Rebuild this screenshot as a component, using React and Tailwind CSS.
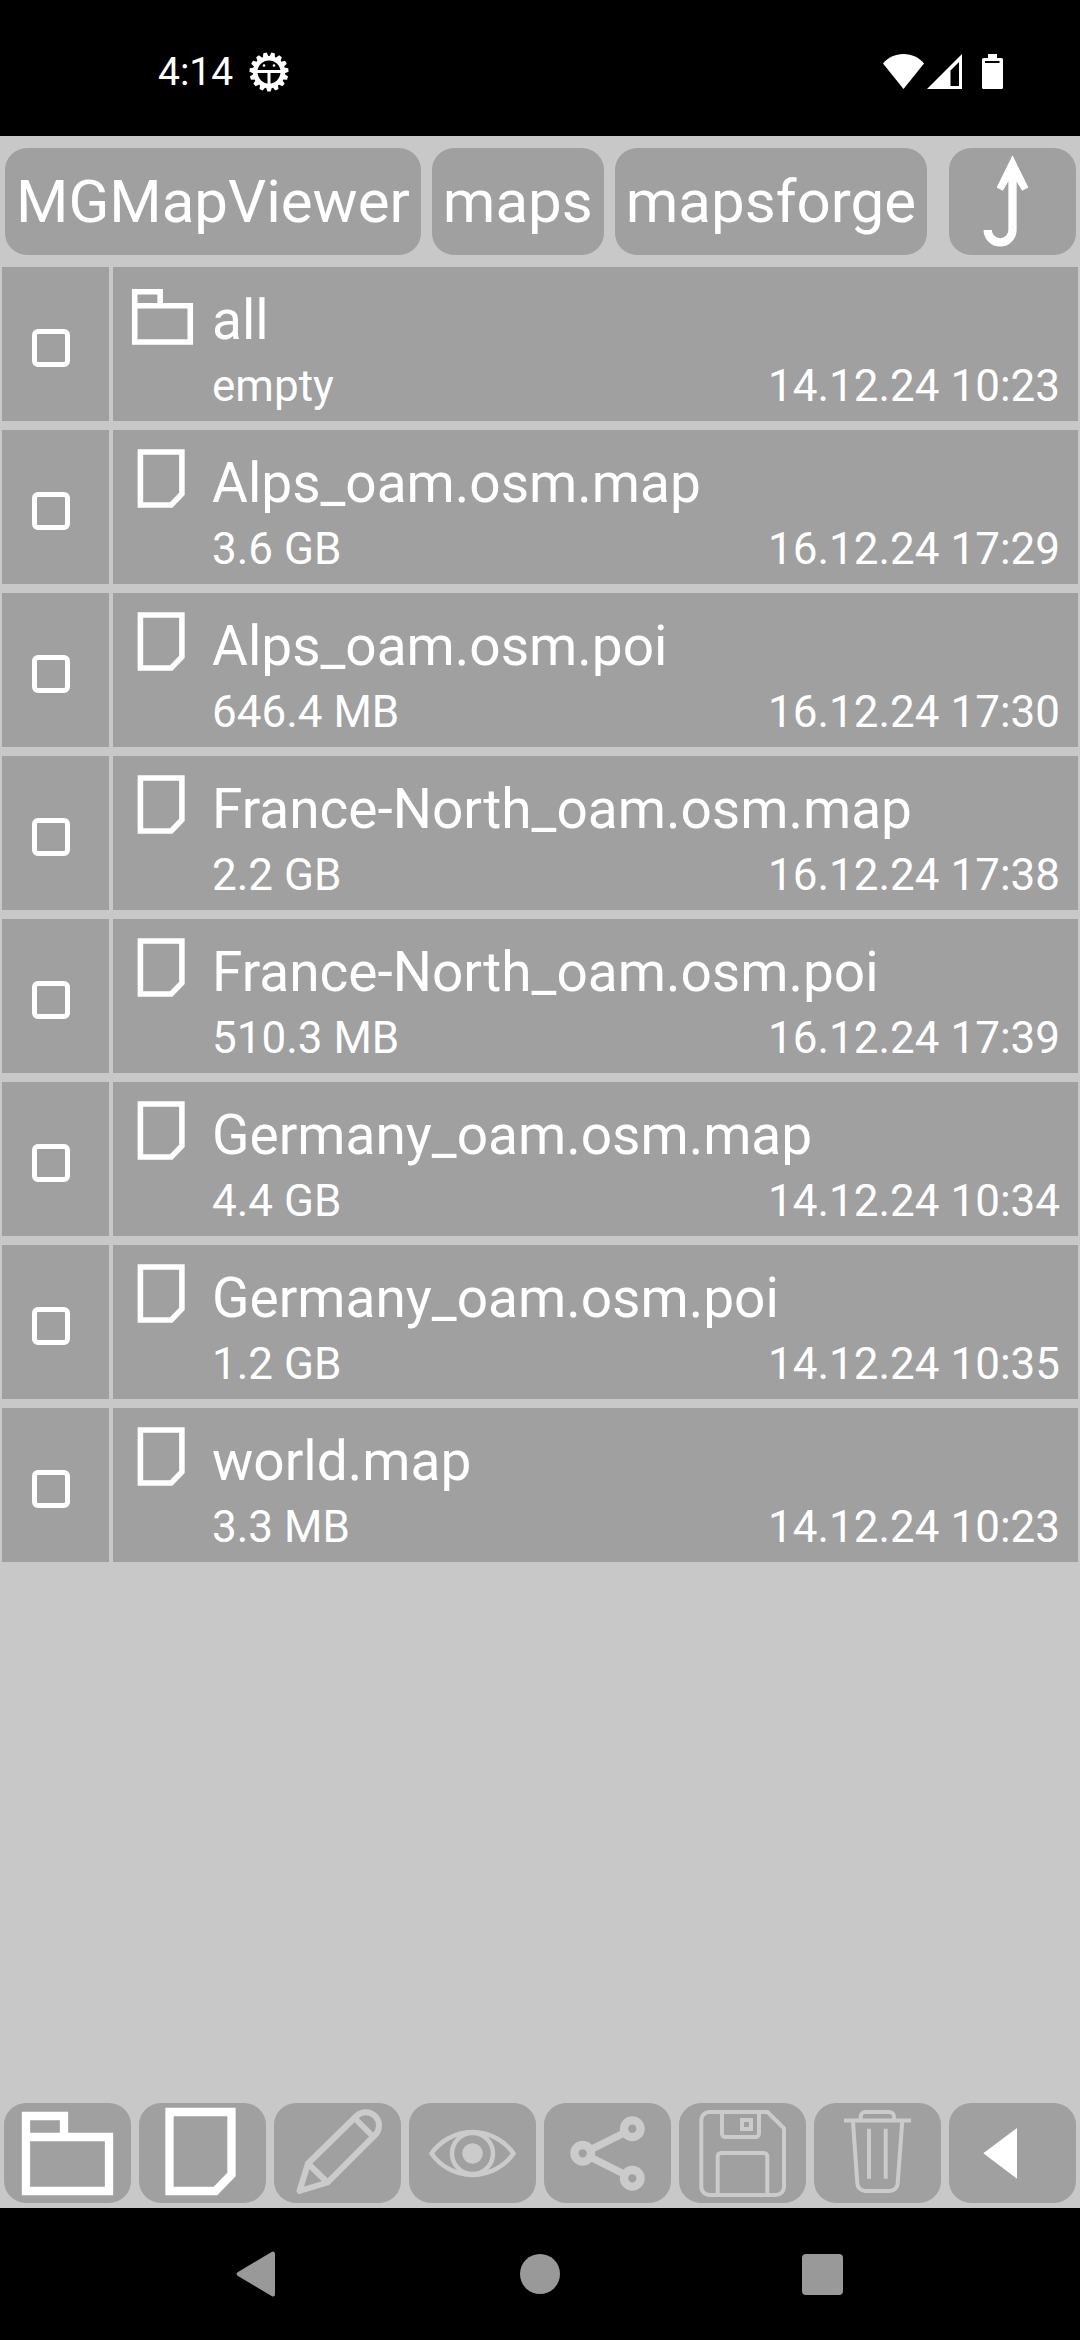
const files = [
  { name: 'all', size: 'empty', date: '14.12.24 10:23', folder: true },
  { name: 'Alps_oam.osm.map', size: '3.6 GB', date: '16.12.24 17:29' },
  { name: 'Alps_oam.osm.poi', size: '646.4 MB', date: '16.12.24 17:30' },
  { name: 'France-North_oam.osm.map', size: '2.2 GB', date: '16.12.24 17:38' },
  { name: 'France-North_oam.osm.poi', size: '510.3 MB', date: '16.12.24 17:39' },
  { name: 'Germany_oam.osm.map', size: '4.4 GB', date: '14.12.24 10:34' },
  { name: 'Germany_oam.osm.poi', size: '1.2 GB', date: '14.12.24 10:35' },
  { name: 'world.map', size: '3.3 MB', date: '14.12.24 10:23' },
];

const crumbs = ['MGMapViewer', 'maps', 'mapsforge'];

function Icon({ className = 'h-[100px] w-[127px]', children }) {
  return (
    <svg viewBox="0 0 127 100" className={className} fill="none" stroke="currentColor" aria-hidden="true">
      {children}
    </svg>
  );
}

function FolderIcon({ className }) {
  return (
    <Icon className={className}>
      <path d="M22 34V13h38v21M22 34h83v54H22z" strokeWidth="8.3" strokeLinecap="butt" />
    </Icon>
  );
}

function FileIcon({ className }) {
  return (
    <Icon className={className}>
      <path d="M30.5 9h62v62.500L76.500 88h-46z" strokeWidth="8.3" />
    </Icon>
  );
}

function PencilIcon() {
  return (
    <Icon>
      <g strokeWidth="6" strokeLinejoin="round">
        <path d="M25.500 88l8.500-27.500L82.500 13a13 13 0 0 1 18.500 19L53.500 79.500z" />
        <path d="M34 60.500l19.500 19M80.500 15l18 18" />
      </g>
    </Icon>
  );
}

function EyeIcon() {
  return (
    <Icon>
      <g strokeWidth="4.500">
        <path d="M22.500 50.500a50 50 0 0 1 82 0a50 50 0 0 1-82 0z" />
        <circle cx="63.500" cy="50.500" r="20.500" />
        <circle cx="63.500" cy="50.500" r="10.300" fill="currentColor" stroke="none" />
      </g>
    </Icon>
  );
}

function ShareIcon() {
  return (
    <Icon>
      <g strokeWidth="8.300">
        <circle cx="38.700" cy="50.300" r="8.300" />
        <circle cx="88.300" cy="25.700" r="8.300" />
        <circle cx="88.300" cy="75.300" r="8.300" />
        <path d="M46 47l35-17.500M46 54l35 17.500" strokeWidth="7.500" />
      </g>
    </Icon>
  );
}

function SaveIcon() {
  return (
    <Icon>
      <g strokeWidth="4">
        <path d="M30.300 9H88.500L105 25.300V84a8 8 0 0 1-8 8H30.300a8 8 0 0 1-8-8V17a8 8 0 0 1 8-8z" />
        <path d="M43 9v21.500a3.500 3.500 0 0 0 3.500 3.500h30a3.500 3.500 0 0 0 3.500-3.500V9" />
        <rect x="63" y="17" width="9" height="9" />
        <path d="M38.700 92V53.500a3.500 3.500 0 0 1 3.500-3.500h42.600a3.500 3.500 0 0 1 3.500 3.500V92" />
      </g>
    </Icon>
  );
}

function TrashIcon() {
  return (
    <Icon>
      <g strokeWidth="4">
        <path d="M30 17.500h67M46.700 17v-3.500a4.500 4.500 0 0 1 4.500-4.500h24.300a4.500 4.500 0 0 1 4.500 4.500V17" />
        <path d="M39 19l4.300 61a8 8 0 0 0 8 8h24.400a8 8 0 0 0 8-8l4.500-61" />
        <path d="M55 25.700v50M71.700 25.700v50" />
      </g>
    </Icon>
  );
}

function BackIcon() {
  return (
    <Icon>
      <path d="M34.300 50.300L68 25v50.700z" fill="currentColor" stroke="none" />
    </Icon>
  );
}

function UpIcon() {
  return (
    <svg viewBox="0 0 127 107" className="h-[107px] w-[127px]" fill="none" aria-hidden="true">
      <path d="M63.500 7.300L79.400 39.600l-6.200 3.200-5.600-9.300h-8.300l-5.500 9.300-6.200-3.200z" fill="currentColor" />
      <path d="M63.500 30v52a12.400 12.400 0 0 1-24.800 0" stroke="currentColor" strokeWidth="8.300" />
    </svg>
  );
}

function GearIcon() {
  const teeth = Array.from({ length: 15 }, (_, i) => i * 24);
  return (
    <svg viewBox="-20 -20 40 40" className="size-10" fill="none" stroke="currentColor" aria-hidden="true">
      <circle r="13.800" strokeWidth="4.600" />
      {teeth.map((angle) => (
        <path
          key={angle}
          d="M-3 15L-1.700 19.500H1.700L3 15z"
          fill="currentColor"
          stroke="none"
          transform={`rotate(${angle})`}
        />
      ))}
      <path d="M-13 -0.500H13M0 0V13" strokeWidth="3" />
      <circle cx="-5" cy="-6.500" r="1.300" fill="currentColor" stroke="none" />
      <circle cx="5" cy="-6.500" r="1.300" fill="currentColor" stroke="none" />
    </svg>
  );
}

function StatusIcons() {
  return (
    <div className="flex items-center">
      <svg viewBox="0 0 41 35" className="h-[35px] w-[41px]" aria-hidden="true">
        <path d="M0 9.500C5 3.500 12 0 20.500 0S36 3.500 41 9.500L20.500 35z" fill="currentColor" />
      </svg>
      <svg viewBox="0 0 35 35" className="ml-[3px] h-[35px] w-[35px]" aria-hidden="true">
        <path d="M35 0V35H0zM32 8l-8.500 8.500V32H32z" fill="currentColor" fillRule="evenodd" />
      </svg>
      <svg viewBox="0 0 21 35" className="ml-5 h-[35px] w-[21px]" aria-hidden="true">
        <path
          d="M6 0h9v4h4.500A1.500 1.500 0 0 1 21 5.500v28a1.500 1.500 0 0 1-1.500 1.500h-18A1.500 1.500 0 0 1 0 33.500v-28A1.500 1.500 0 0 1 1.500 4H6zM3 7v2h14.500V7z"
          fill="currentColor"
          fillRule="evenodd"
        />
      </svg>
    </div>
  );
}

const actions = [
  { label: 'New folder', Glyph: FolderIcon, enabled: true },
  { label: 'New file', Glyph: FileIcon, enabled: true },
  { label: 'Edit', Glyph: PencilIcon },
  { label: 'View', Glyph: EyeIcon },
  { label: 'Share', Glyph: ShareIcon },
  { label: 'Save', Glyph: SaveIcon },
  { label: 'Delete', Glyph: TrashIcon },
  { label: 'Back', Glyph: BackIcon, enabled: true },
];

function FileRow({ file }) {
  const Glyph = file.folder ? FolderIcon : FileIcon;
  return (
    <li className="flex gap-1">
      <label className="flex w-[107px] shrink-0 items-center bg-[#a0a0a0] pt-2 pl-[30px]">
        <input
          type="checkbox"
          aria-label={`Select ${file.name}`}
          className="size-[38px] appearance-none rounded-md border-[5px] border-white checked:bg-white"
        />
      </label>
      <button type="button" className="flex min-w-0 flex-1 items-start bg-[#a0a0a0] pr-[18px] pl-[7px] text-left">
        <Glyph className="mt-4 h-[67px] w-[85px] shrink-0" />
        <span className="flex min-w-0 flex-1 flex-col gap-2 pt-[21px] pb-[9px] pl-[7px]">
          <span className="truncate text-[55px] leading-[64px]">{file.name}</span>
          <span className="flex justify-between text-[44px] leading-[52px]">
            <span>{file.size}</span>
            <span>{file.date}</span>
          </span>
        </span>
      </button>
    </li>
  );
}

export default function App() {
  return (
    <div className="flex min-h-screen flex-col bg-[#c8c8c8] font-[Roboto,sans-serif] text-white">
      <header className="flex h-[136px] items-center justify-between bg-black pt-[7px] pr-[77px] pl-[158px]">
        <div className="flex items-center gap-4">
          <time className="text-[39px] leading-[46px]">4:14</time>
          <GearIcon />
        </div>
        <StatusIcons />
      </header>

      <nav aria-label="Path" className="flex gap-[11px] py-3 pr-1 pl-[5px]">
        {crumbs.map((name) => (
          <button
            key={name}
            type="button"
            className="h-[107px] rounded-[22px] bg-[#a0a0a0] px-[11px] text-[60px] leading-[70px]"
          >
            {name}
          </button>
        ))}
        <button type="button" aria-label="Up one folder" className="ml-auto rounded-[22px] bg-[#a0a0a0]">
          <UpIcon />
        </button>
      </nav>

      <main className="flex-1 px-[2px]">
        <ul className="flex flex-col gap-[9px]">
          {files.map((file) => (
            <FileRow key={file.name} file={file} />
          ))}
        </ul>
      </main>

      <div role="toolbar" aria-label="File actions" className="grid grid-cols-8 gap-2 px-1 pb-[5px]">
        {actions.map(({ label, Glyph, enabled }) => (
          <button
            key={label}
            type="button"
            aria-label={label}
            disabled={!enabled}
            className="flex h-[100px] justify-center rounded-[22px] bg-[#a0a0a0] disabled:text-[#cbcbcb]"
          >
            <Glyph />
          </button>
        ))}
      </div>

      <nav aria-label="System" className="grid h-[132px] grid-cols-3 bg-black px-[117px] text-[#999999]">
        <button type="button" aria-label="System back" className="flex items-center justify-center">
          <svg viewBox="0 0 44 46" className="h-[46px] w-[44px]" aria-hidden="true">
            <path d="M2 21L36 .7Q39 -.5 39 3V43Q39 46.500 36 45.300L2 25Q-1 23 2 21z" fill="currentColor" />
          </svg>
        </button>
        <button type="button" aria-label="Home" className="flex items-center justify-center">
          <span className="size-10 rounded-full bg-current" />
        </button>
        <button type="button" aria-label="Recent apps" className="flex items-center justify-center">
          <span className="size-[41px] rounded bg-current" />
        </button>
      </nav>
    </div>
  );
}
